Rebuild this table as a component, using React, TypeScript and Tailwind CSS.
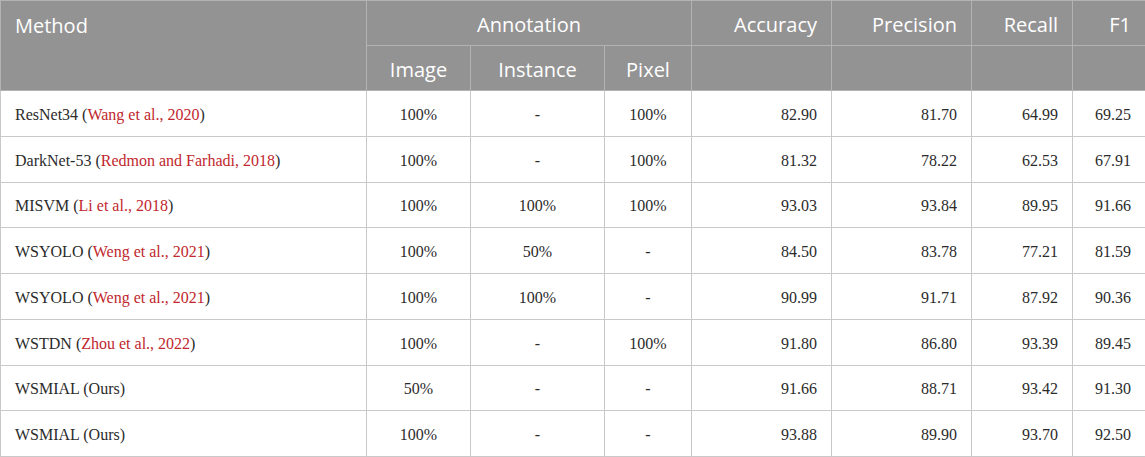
import React from 'react';

type Row = {
    name: string;
    cite?: string;
    image: string;
    instance: string;
    pixel: string;
    accuracy: string;
    precision: string;
    recall: string;
    f1: string;
};

const rows: Row[] = [
    { name: 'ResNet34', cite: 'Wang et al., 2020', image: '100%', instance: '-', pixel: '100%', accuracy: '82.90', precision: '81.70', recall: '64.99', f1: '69.25' },
    { name: 'DarkNet-53', cite: 'Redmon and Farhadi, 2018', image: '100%', instance: '-', pixel: '100%', accuracy: '81.32', precision: '78.22', recall: '62.53', f1: '67.91' },
    { name: 'MISVM', cite: 'Li et al., 2018', image: '100%', instance: '100%', pixel: '100%', accuracy: '93.03', precision: '93.84', recall: '89.95', f1: '91.66' },
    { name: 'WSYOLO', cite: 'Weng et al., 2021', image: '100%', instance: '50%', pixel: '-', accuracy: '84.50', precision: '83.78', recall: '77.21', f1: '81.59' },
    { name: 'WSYOLO', cite: 'Weng et al., 2021', image: '100%', instance: '100%', pixel: '-', accuracy: '90.99', precision: '91.71', recall: '87.92', f1: '90.36' },
    { name: 'WSTDN', cite: 'Zhou et al., 2022', image: '100%', instance: '-', pixel: '100%', accuracy: '91.80', precision: '86.80', recall: '93.39', f1: '89.45' },
    { name: 'WSMIAL (Ours)', image: '50%', instance: '-', pixel: '-', accuracy: '91.66', precision: '88.71', recall: '93.42', f1: '91.30' },
    { name: 'WSMIAL (Ours)', image: '100%', instance: '-', pixel: '-', accuracy: '93.88', precision: '89.90', recall: '93.70', f1: '92.50' },
];

// header cells: grey band, white sans text
const th = "h-[45px] border border-[#b3b3b3] px-[14px] pt-[3px] font-normal text-[20px] text-white";
// body cells: serif text, light grid
const td = "h-[45.75px] border border-[#c9c9c9] px-[14px] pt-[3px] text-[16px] text-[#2b2b2b]";

export default function App() {
    return (
        <div className="w-[1145px] h-[457px] bg-white overflow-hidden">
            <table className="w-[1145px] table-fixed border-collapse">
                <colgroup>
                    <col className="w-[366px]" />
                    <col className="w-[104px]" />
                    <col className="w-[134px]" />
                    <col className="w-[87px]" />
                    <col className="w-[140px]" />
                    <col className="w-[140px]" />
                    <col className="w-[101px]" />
                    <col className="w-[73px]" />
                </colgroup>
                <thead className="bg-[#939393] font-['Open_Sans',sans-serif]">
                    <tr>
                        <th rowSpan={2} className={`${th} text-left align-top pt-[10px]`}>Method</th>
                        <th colSpan={3} className={`${th} text-center`}>Annotation</th>
                        <th className={`${th} text-right`}>Accuracy</th>
                        <th className={`${th} text-right`}>Precision</th>
                        <th className={`${th} text-right`}>Recall</th>
                        <th className={`${th} text-right`}>F1</th>
                    </tr>
                    <tr>
                        <th className={`${th} text-center`}>Image</th>
                        <th className={`${th} text-center`}>Instance</th>
                        <th className={`${th} text-center`}>Pixel</th>
                        <th className={th}></th>
                        <th className={th}></th>
                        <th className={th}></th>
                        <th className={th}></th>
                    </tr>
                </thead>
                <tbody className="font-['Liberation_Serif',serif]">
                    {rows.map((r, i) => (
                        <tr key={i}>
                            <td className={`${td} text-left`}>
                                {r.name}
                                {r.cite && (
                                    <>
                                        {' ('}
                                        <span className="text-[#c1272d]">{r.cite}</span>
                                        {')'}
                                    </>
                                )}
                            </td>
                            <td className={`${td} text-center`}>{r.image}</td>
                            <td className={`${td} text-center`}>{r.instance}</td>
                            <td className={`${td} text-center`}>{r.pixel}</td>
                            <td className={`${td} text-right`}>{r.accuracy}</td>
                            <td className={`${td} text-right`}>{r.precision}</td>
                            <td className={`${td} text-right`}>{r.recall}</td>
                            <td className={`${td} text-right`}>{r.f1}</td>
                        </tr>
                    ))}
                </tbody>
            </table>
        </div>
    );
}
